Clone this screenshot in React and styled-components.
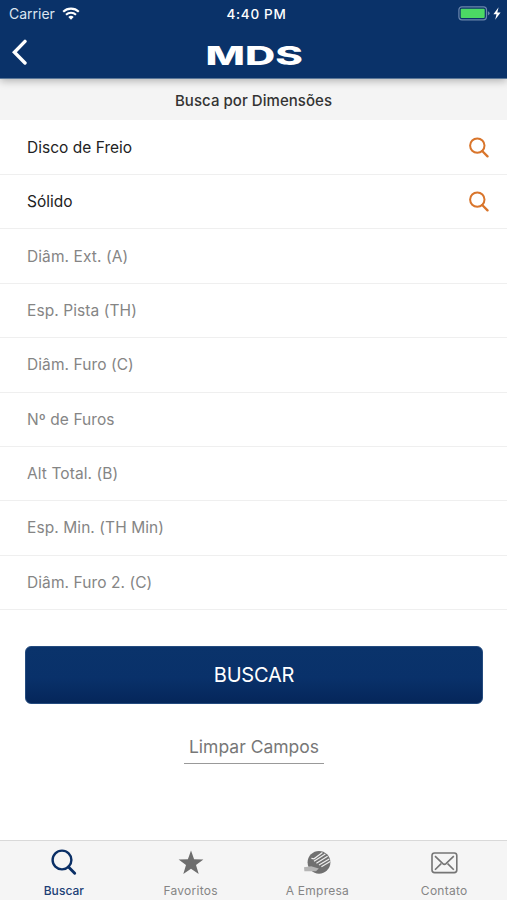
import styled, { createGlobalStyle } from "styled-components";

const fields = [
  { label: "Disco de Freio", filled: true },
  { label: "Sólido", filled: true },
  { label: "Diâm. Ext. (A)" },
  { label: "Esp. Pista (TH)" },
  { label: "Diâm. Furo (C)" },
  { label: "Nº de Furos" },
  { label: "Alt Total. (B)" },
  { label: "Esp. Min. (TH Min)" },
  { label: "Diâm. Furo 2. (C)" },
];

const tabs = [
  { label: "Buscar", icon: <TabSearchIcon />, active: true },
  { label: "Favoritos", icon: <StarIcon /> },
  { label: "A Empresa", icon: <CompanyIcon /> },
  { label: "Contato", icon: <MailIcon /> },
];

export default function App() {
  return (
    <Screen>
      <GlobalStyle />
      <Header>
        <StatusBar>
          <Carrier>
            Carrier <WifiIcon />
          </Carrier>
          <Clock>4:40 PM</Clock>
          <Power>
            <BatteryIcon />
          </Power>
        </StatusBar>
        <NavBar>
          <BackButton aria-label="Voltar">
            <BackIcon />
          </BackButton>
          <Logo>MDS</Logo>
        </NavBar>
      </Header>
      <SectionTitle>Busca por Dimensões</SectionTitle>
      <Fields>
        {fields.map(({ label, filled }) => (
          <Field key={label} $filled={filled}>
            {label}
            {filled && <FieldSearchIcon />}
          </Field>
        ))}
      </Fields>
      <Actions>
        <SubmitButton>BUSCAR</SubmitButton>
        <ClearButton>Limpar Campos</ClearButton>
      </Actions>
      <TabBar>
        {tabs.map(({ label, icon, active }) => (
          <Tab key={label} $active={active}>
            <TabIcon>{icon}</TabIcon>
            {label}
          </Tab>
        ))}
      </TabBar>
    </Screen>
  );
}

function WifiIcon() {
  return (
    <svg width="18" height="13" viewBox="0 0 18 13" fill="none" stroke="#fff">
      <path d="M1.2 4.8a11.2 11.2 0 0 1 15.6 0" strokeWidth="2.1" />
      <path d="M4 7.8a7.2 7.2 0 0 1 10 0" strokeWidth="2" />
      <path d="M6.3 10.1a3.9 3.9 0 0 1 5.4 0L9 12.7z" fill="#fff" stroke="none" />
    </svg>
  );
}

function BatteryIcon() {
  return (
    <svg width="44" height="16" viewBox="0 0 44 16">
      <rect x="0.9" y="0.8" width="27.6" height="13" rx="3" fill="none" stroke="#6b86ac" strokeWidth="1.2" />
      <rect x="2.7" y="2.7" width="24" height="9.3" rx="1" fill="#4cd964" />
      <path d="M29.9 5.2q1.7.6 1.7 2.1t-1.7 2.1z" fill="#6b86ac" />
      <path d="M40.6 1.2 35.4 8.2h3.1l-1.3 5.6 5.4-7.3h-3.3z" fill="#fff" />
    </svg>
  );
}

function BackIcon() {
  return (
    <svg width="16" height="27" viewBox="0 0 16 27" fill="none" stroke="#fff" strokeWidth="3.4">
      <path d="M14 2.4 3.4 13.2 14 24" strokeLinecap="round" strokeLinejoin="miter" />
    </svg>
  );
}

function FieldSearchIcon() {
  return (
    <svg width="20" height="21" viewBox="0 0 20 21" fill="none" stroke="#d9752b">
      <circle cx="8.3" cy="8.6" r="7.2" strokeWidth="2" />
      <path d="m13.2 14 5.3 5.4" strokeWidth="2.3" strokeLinecap="round" />
    </svg>
  );
}

function TabSearchIcon() {
  return (
    <svg width="26" height="27" viewBox="0 0 26 27" fill="none" stroke="#0a2f66">
      <circle cx="11" cy="11" r="9.4" strokeWidth="2.4" />
      <path d="m17.5 17.9 6.2 6.3" strokeWidth="2.9" strokeLinecap="round" />
    </svg>
  );
}

function StarIcon() {
  return (
    <svg width="26" height="25" viewBox="0 0 26 25">
      <path
        d="m13 .4 3.1 8.8 9.3.2-7.4 5.7 2.7 8.9L13 18.7 5.3 24l2.7-8.9L.6 9.4l9.3-.2z"
        fill="#6e6e6e"
      />
    </svg>
  );
}

function CompanyIcon() {
  return (
    <svg width="27" height="25" viewBox="0 0 27 25">
      <circle cx="15" cy="12.3" r="11.4" fill="#707070" />
      <path d="M0 17.2 7.2 16.2 14.8 18.4 12 21.2H.4z" fill="#b5b5b5" />
      <g fill="none" stroke="#efefef" strokeWidth="1.2">
        <path d="M7.4 8.3 10 8.8 18.4 2.6" />
        <path d="M10 11.3 21.3 4.1" />
        <path d="M12.4 13.3 23.6 6.3" />
        <path d="M15 15 25.2 8.9" />
        <path d="M17.4 16.8 26.2 11.6" />
      </g>
    </svg>
  );
}

function MailIcon() {
  return (
    <svg width="27" height="22" viewBox="0 0 27 22" fill="none" stroke="#757575" strokeWidth="1.6">
      <rect x="1" y="1" width="24.8" height="19.6" rx="2.6" />
      <path d="m4 4.1 7.8 7.5q1.6 1.4 3.2 0l7.8-7.5M4 17.8l6.2-6.2M22.8 17.8l-6.2-6.2" />
    </svg>
  );
}

const GlobalStyle = createGlobalStyle`
  * {
    box-sizing: border-box;
  }

  body {
    margin: 0;
    background: #fff;
    font-family: Inter, "Liberation Sans", sans-serif;
  }

  button {
    padding: 0;
    border: 0;
    background: none;
    font: inherit;
  }

  svg {
    display: block;
    flex: none;
  }
`;

const Screen = styled.div`
  display: flex;
  flex-direction: column;
  height: 900px;
  overflow: hidden;
`;

const Header = styled.header`
  height: 79px;
  flex: none;
  background: #0a3269;
  border-bottom: 1px solid #5c7898;
  box-shadow: 0 2px 8px rgba(0, 0, 0, 0.28);
  color: #fff;
  z-index: 1;
`;

const StatusBar = styled.div`
  display: grid;
  grid-template-columns: 1fr auto 1fr;
  align-items: center;
  height: 27px;
  padding: 0 5px 0 9px;
`;

const Carrier = styled.div`
  display: flex;
  align-items: center;
  gap: 7px;
  color: #dce5f0;
  font-size: 14px;
`;

const Clock = styled.div`
  padding-left: 2px;
  font-size: 13.5px;
  font-weight: 500;
  letter-spacing: 0.7px;
`;

const Power = styled.div`
  display: flex;
  justify-content: flex-end;
`;

const NavBar = styled.div`
  display: grid;
  grid-template-columns: 1fr auto 1fr;
  height: 50px;
  padding: 0 10px 0 11px;
`;

const BackButton = styled.button`
  justify-self: start;
  align-self: center;
`;

const Logo = styled.div`
  align-self: center;
  padding-top: 8px;
  font-size: 26px;
  line-height: 32px;
  font-weight: 800;
  transform: scaleX(1.61);
`;

const SectionTitle = styled.h1`
  flex: none;
  height: 41px;
  margin: 0;
  background: #f4f4f4;
  color: #333;
  font-size: 15px;
  font-weight: 500;
  line-height: 43px;
  letter-spacing: 0.05px;
  text-align: center;
`;

const Fields = styled.div`
  display: grid;
  grid-template-rows: 55px repeat(8, 54.375px);
`;

const Field = styled.div`
  display: flex;
  align-items: center;
  justify-content: space-between;
  padding: 0 18px 0 27px;
  border-bottom: 1px solid #efefef;
  color: ${({ $filled }) => ($filled ? "#222" : "#858585")};
  font-size: 15.5px;
  letter-spacing: ${({ $filled }) => ($filled ? "0.02px" : "0.08px")};
`;

const Actions = styled.div`
  display: flex;
  flex: 1;
  flex-direction: column;
  align-items: center;
  padding: 36px 24px 0 25px;
`;

const SubmitButton = styled.button`
  width: 100%;
  height: 58px;
  border: 1px solid #244b7e;
  border-radius: 6px;
  background: linear-gradient(#0a336b 0%, #09316a 55%, #05265a 100%);
  color: #fff;
  font-size: 20px;
  letter-spacing: -0.2px;
`;

const ClearButton = styled.button`
  width: 140px;
  height: 34px;
  margin-top: 26px;
  border-bottom: 1.5px solid #999;
  color: #777;
  font-size: 17.5px;
  white-space: nowrap;
`;

const TabBar = styled.nav`
  display: grid;
  grid-template-columns: repeat(4, 1fr);
  flex: none;
  height: 60px;
  border-top: 1px solid #d9d9d9;
  background: #f5f5f5;
`;

const Tab = styled.div`
  display: flex;
  flex-direction: column;
  align-items: center;
  padding: 6px 0 0 1px;
  color: ${({ $active }) => ($active ? "#1c3f75" : "#858585")};
  font-size: 12px;
  font-weight: ${({ $active }) => ($active ? 500 : 400)};
  line-height: 16px;
  letter-spacing: ${({ $active }) => ($active ? "0.05px" : "0.25px")};
`;

const TabIcon = styled.div`
  display: grid;
  place-items: center;
  height: 31px;
  margin-bottom: 5px;
`;
